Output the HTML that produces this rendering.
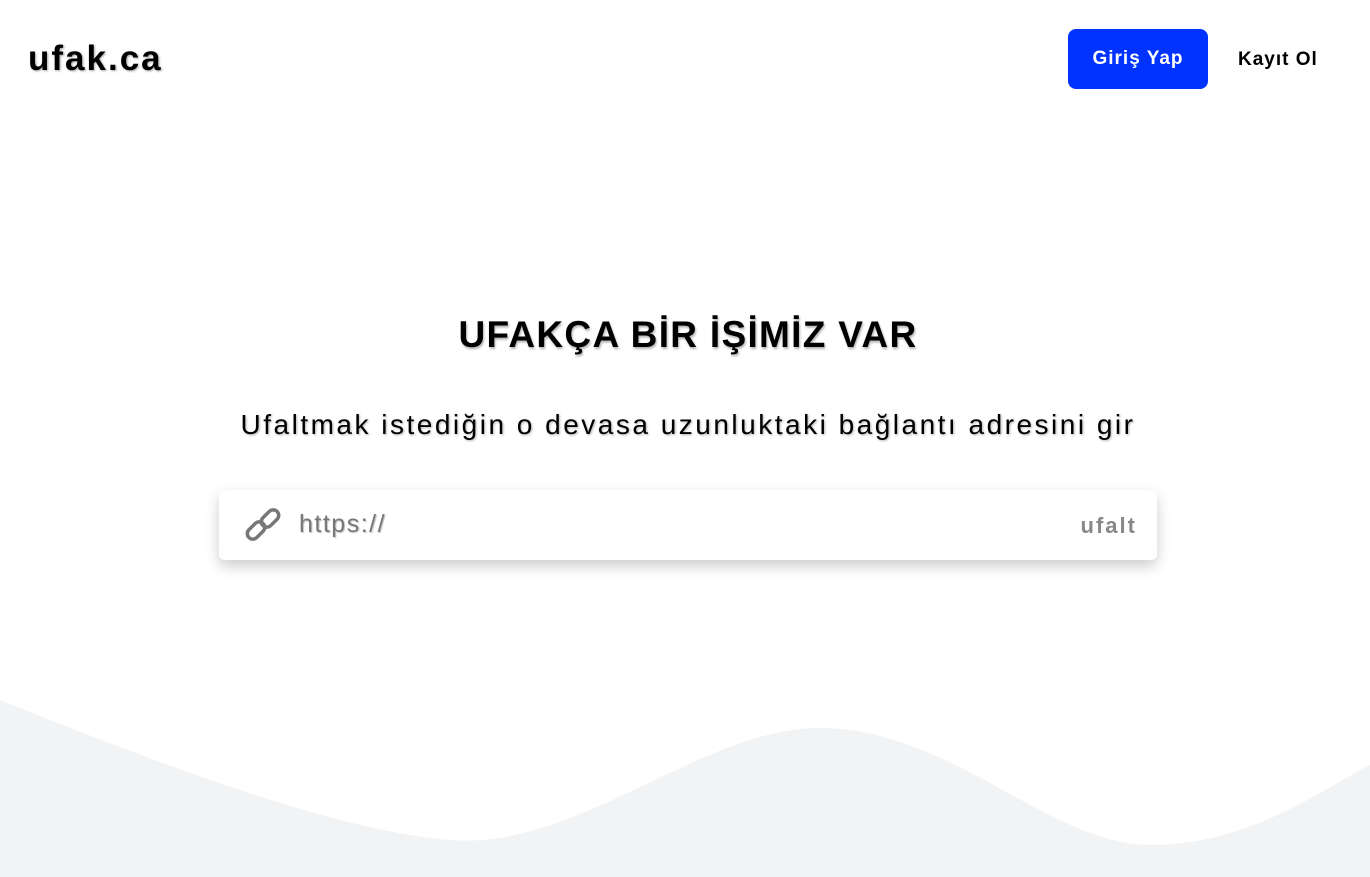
<!DOCTYPE html>
<html><head><meta charset="utf-8"><style>
html,body{margin:0;padding:0;width:1370px;height:877px;overflow:hidden;background:#fff;font-family:"Liberation Sans",sans-serif;color:#000;position:relative}
.logo{position:absolute;left:28px;top:39px;font-size:35px;font-weight:bold;letter-spacing:2px;text-shadow:1px 1px 2px rgba(0,0,0,.35)}
.btn{position:absolute;left:1068px;top:29px;width:140px;height:60px;background:#0033ff;border-radius:8px;color:#fff;font-weight:bold;font-size:19px;line-height:60px;text-align:center;letter-spacing:1px}
.reg{position:absolute;left:1238px;top:49px;font-weight:bold;font-size:19px;letter-spacing:1px}
h1{position:absolute;left:0;width:1376px;top:314px;margin:0;text-align:center;font-size:37px;font-weight:bold;letter-spacing:1.3px;text-shadow:1px 2px 2px rgba(0,0,0,.3)}
.sub{position:absolute;left:0;width:1376px;top:409px;text-align:center;font-size:28px;letter-spacing:2.5px;text-shadow:1px 1px 2px rgba(0,0,0,.3)}
.box{position:absolute;left:219px;top:490px;width:938px;height:70px;background:#fff;border-radius:6px;box-shadow:0 6px 14px rgba(0,0,0,.2)}
.ph{position:absolute;left:80px;top:20px;font-size:25px;color:#777;letter-spacing:1.5px;text-shadow:1px 1px 1px rgba(0,0,0,.25)}
.uf{position:absolute;right:20px;top:23px;font-size:22px;font-weight:bold;color:#888;letter-spacing:2px}
svg.w{position:absolute;left:0;top:0}
</style></head><body>
<svg class="w" width="1370" height="877"><path d="M0 700 C150 760 330 830 450 840 C580 850 700 728 820 728 C950 728 1050 845 1150 845 C1250 845 1320 790 1370 765 L1370 877 L0 877Z" fill="#f2f3f5"/></svg>
<div class="logo">ufak.ca</div>
<div class="btn">Giriş Yap</div>
<div class="reg">Kayıt Ol</div>
<h1>UFAKÇA BİR İŞİMİZ VAR</h1>
<div class="sub">Ufaltmak istediğin o devasa uzunluktaki bağlantı adresini gir</div>
<div class="box">
<svg style="position:absolute;left:24px;top:16px" width="40" height="38" viewBox="0 0 40 38"><g fill="none" stroke="#777" stroke-width="3.5" stroke-linecap="round"><rect x="3" y="19" width="20" height="11" rx="5.5" transform="rotate(-45 13 24.5)"/><rect x="17" y="7" width="20" height="11" rx="5.5" transform="rotate(-45 27 12.5)"/></g></svg>
<div class="ph">https://</div>
<div class="uf">ufalt</div>
</div>
</body></html>
